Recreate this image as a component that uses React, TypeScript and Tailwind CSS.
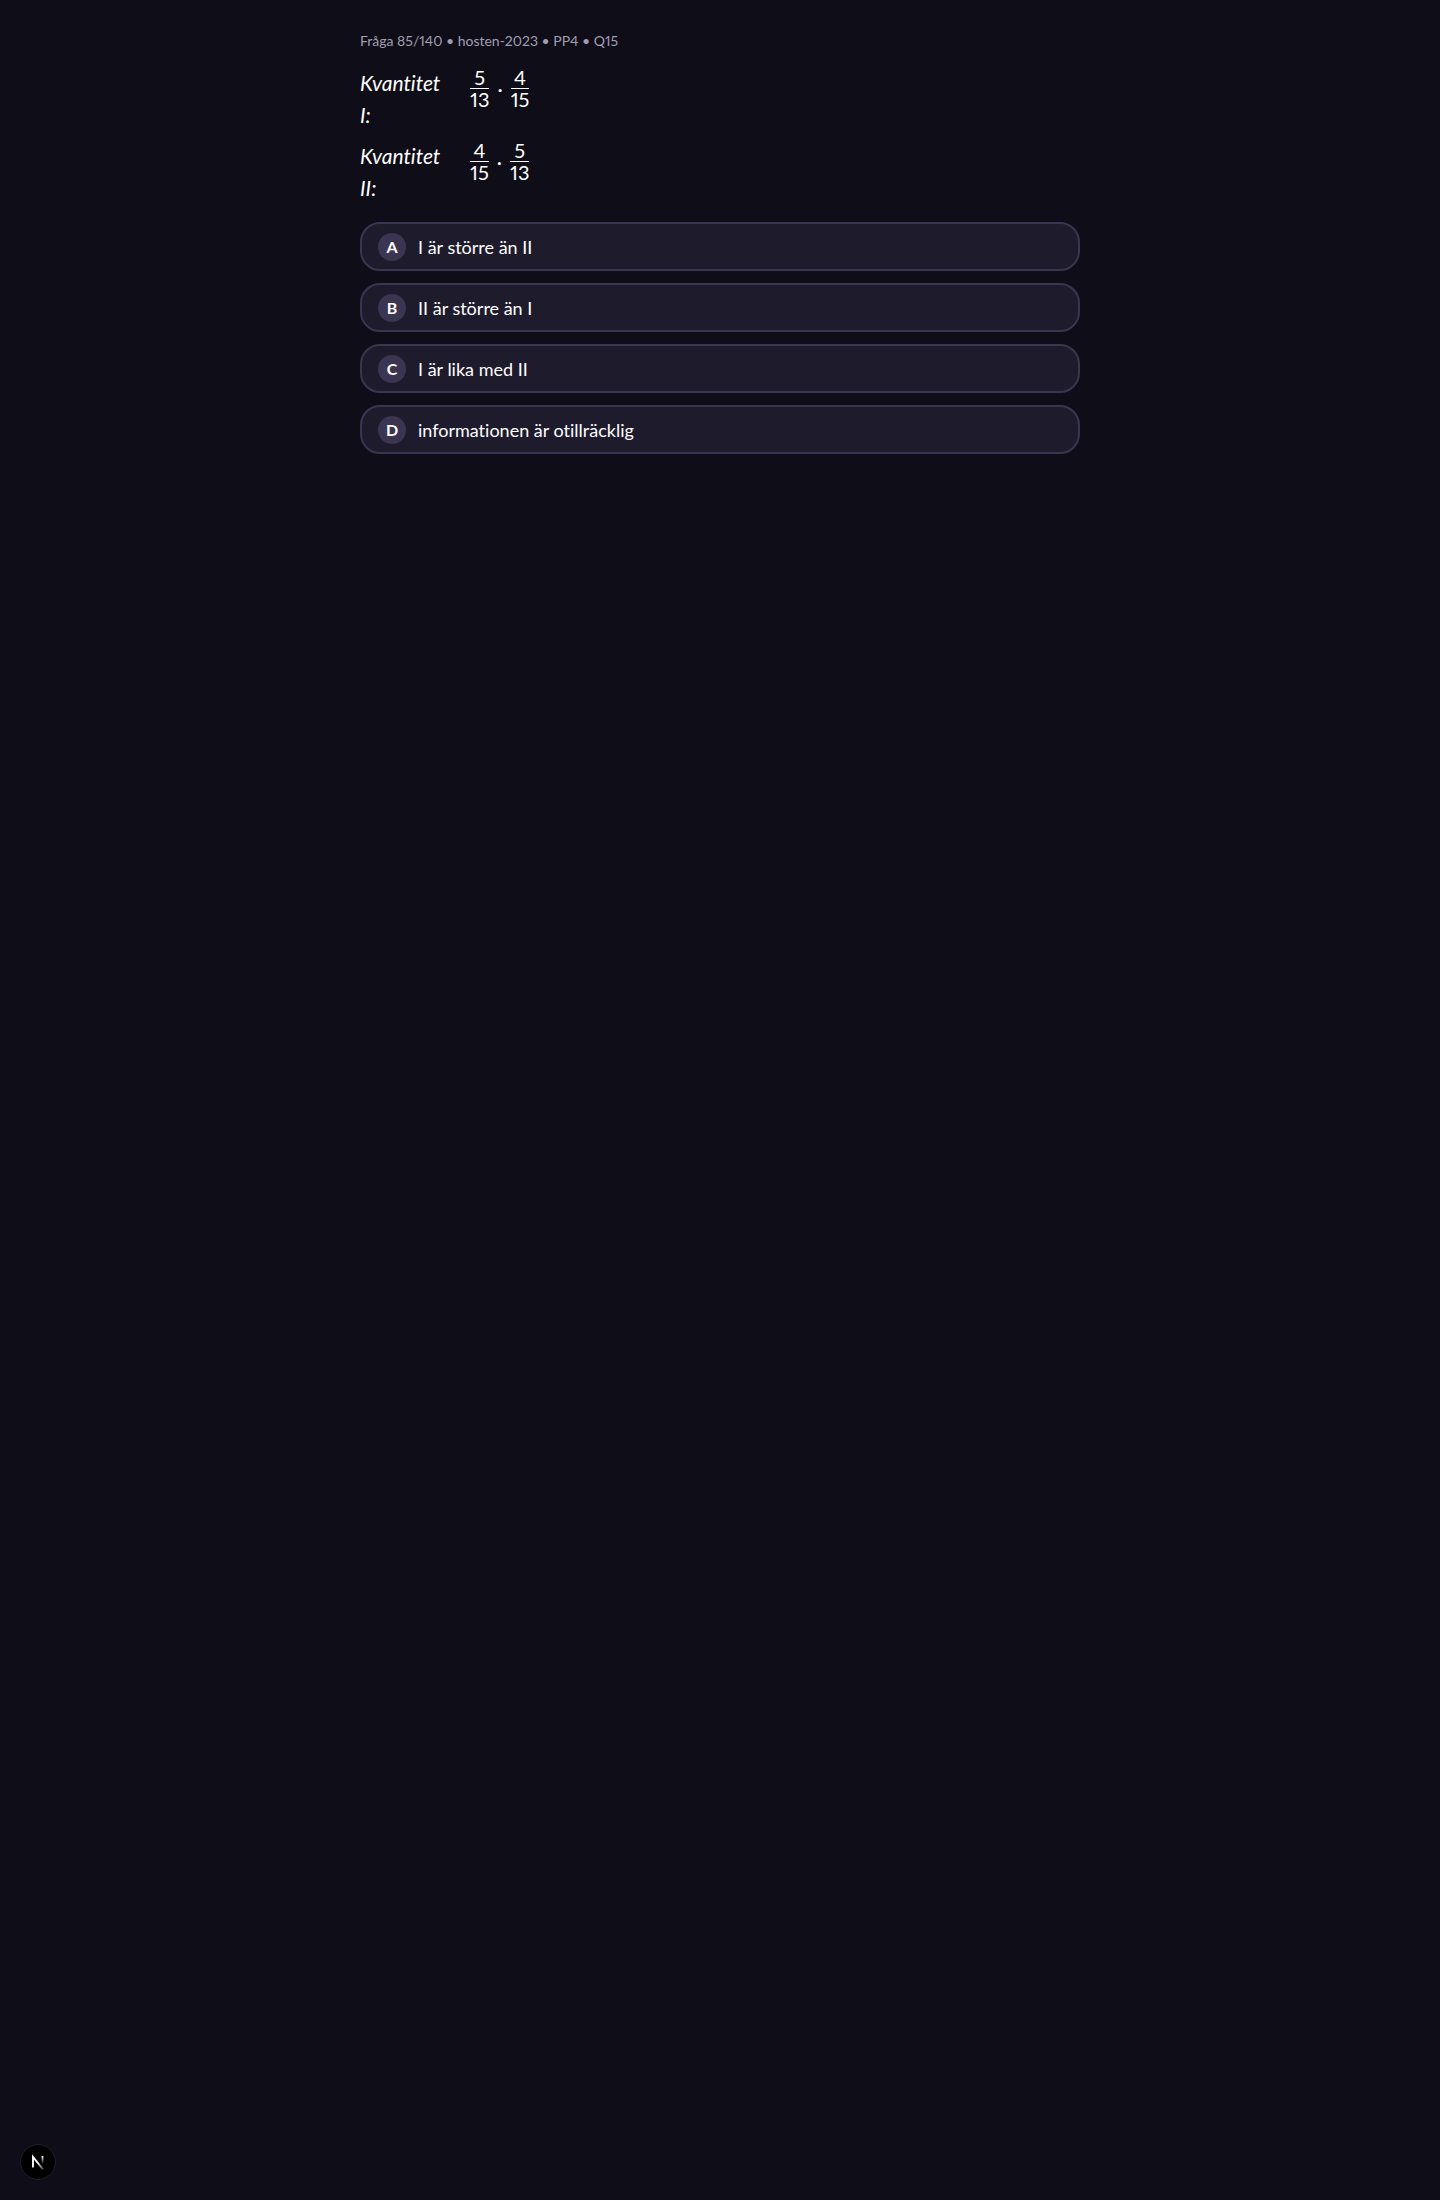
const options = [
  { letter: "A", text: "I är större än II" },
  { letter: "B", text: "II är större än I" },
  { letter: "C", text: "I är lika med II" },
  { letter: "D", text: "informationen är otillräcklig" },
];

function Fraction({ top, bottom }: { top: string; bottom: string }) {
  return (
    <span className="inline-flex flex-col items-center text-xl leading-5">
      <span className="pb-px">{top}</span>
      <span className="border-t border-white">{bottom}</span>
    </span>
  );
}

function Quantity({ label, a, b }: { label: string; a: [string, string]; b: [string, string] }) {
  return (
    <div className="flex items-start gap-6">
      <dt className="w-[86px] text-[21px] leading-8 italic">{label}</dt>
      <dd className="flex items-center gap-2">
        <Fraction top={a[0]} bottom={a[1]} />
        <span className="text-xl leading-5">·</span>
        <Fraction top={b[0]} bottom={b[1]} />
      </dd>
    </div>
  );
}

export default function App() {
  return (
    <div className="min-h-screen bg-[#0f0d18] font-['Lato','Open_Sans',sans-serif] text-white proportional-nums [font-variant-ligatures:none]">
      <main className="mx-auto flex max-w-[752px] flex-col px-4 pt-[31px]">
        <p className="text-sm leading-5 text-[#a29eb2]">Fråga 85/140 • hosten-2023 • PP4 • Q15</p>
        <dl className="mt-4 flex flex-col gap-[9px]">
          <Quantity label="Kvantitet I:" a={["5", "13"]} b={["4", "15"]} />
          <Quantity label="Kvantitet II:" a={["4", "15"]} b={["5", "13"]} />
        </dl>
        <div className="mt-[18px] flex flex-col gap-3">
          {options.map((o) => (
            <button
              key={o.letter}
              type="button"
              className="flex h-[49px] w-full items-center gap-3 rounded-[20px] border-2 border-[#3b3551] bg-[#1e1b2c] px-4 text-left text-lg"
            >
              <span className="flex size-7 shrink-0 items-center justify-center rounded-full bg-[#3b3551] text-base font-bold">
                {o.letter}
              </span>
              <span>{o.text}</span>
            </button>
          ))}
        </div>
      </main>
      <button
        type="button"
        aria-label="Open Next.js Dev Tools"
        className="fixed bottom-5 left-5 flex size-9 items-center justify-center rounded-full border border-[#222127] bg-black"
      >
        <svg width="16" height="16" viewBox="0 0 16 16" fill="none" aria-hidden="true">
          <defs>
            <linearGradient id="diag" x1="8" y1="8" x2="13.5" y2="15.5" gradientUnits="userSpaceOnUse">
              <stop stopColor="#fff" />
              <stop offset="1" stopColor="#fff" stopOpacity="0.2" />
            </linearGradient>
            <linearGradient id="stem" x1="12.5" y1="2" x2="12.5" y2="10" gradientUnits="userSpaceOnUse">
              <stop stopColor="#fff" />
              <stop offset="1" stopColor="#fff" stopOpacity="0" />
            </linearGradient>
          </defs>
          <path d="M3 13.5V3L13 15.3" stroke="url(#diag)" strokeWidth="1.9" />
          <path d="M12.5 2V10" stroke="url(#stem)" strokeWidth="1.8" />
        </svg>
      </button>
    </div>
  );
}
